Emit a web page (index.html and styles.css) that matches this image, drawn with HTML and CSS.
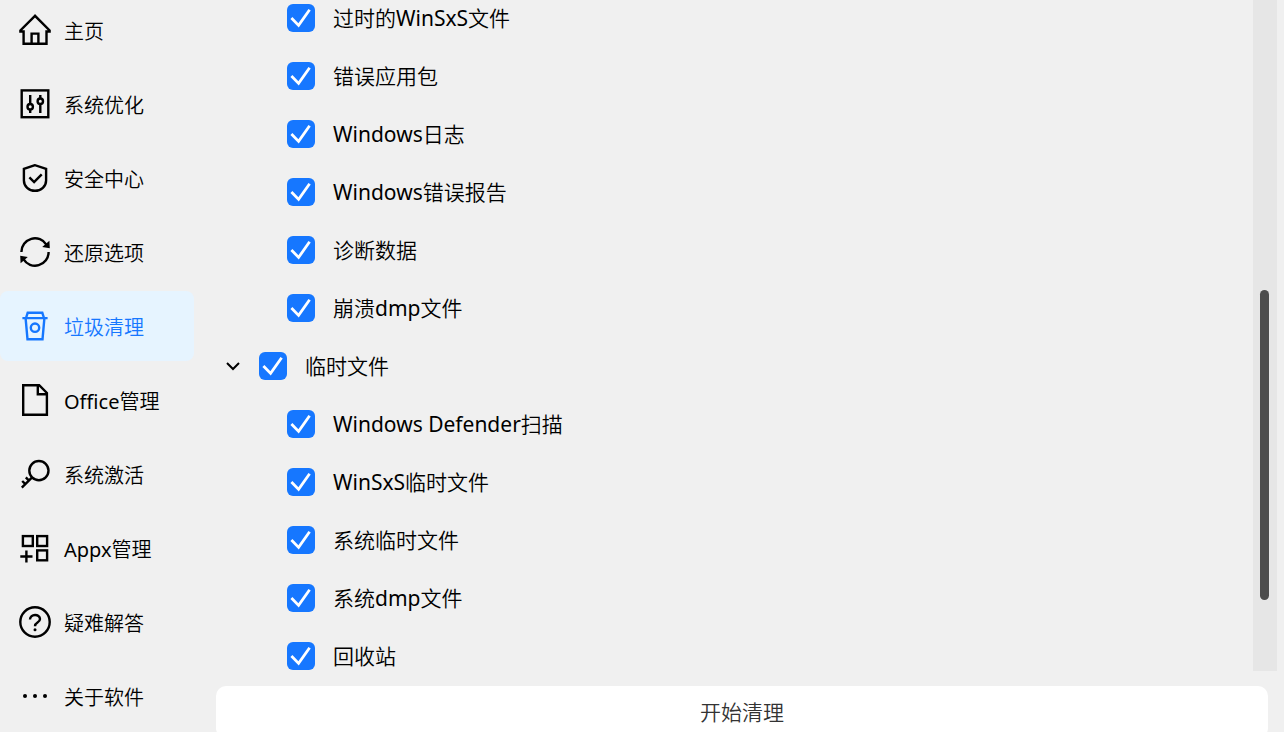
FILE: index.html
```html
<!DOCTYPE html>
<html lang="zh-CN">
<head>
  <meta charset="UTF-8" />
  <title>垃圾清理</title>
  <link rel="stylesheet" href="styles.css">
</head>
<body>
  <nav class="sidebar">
    <a class="nav-item" href="#home">
      <svg class="icon" viewBox="0 0 32 32"><path d="M16 1.8 1.4 16.4v1.1h3.2v12.2h22.9V17.5h3.1v-1.1z"/><path d="M12.6 29.5V19.6h6.8v9.9"/></svg>
      <span class="nav-text">主页</span>
    </a>
    <a class="nav-item" href="#optimize">
      <svg class="icon" viewBox="0 0 32 32"><rect x="2.7" y="2.4" width="26.6" height="26.8"/><path d="M11.2 7v9M11.2 21.6V25M21.3 7v3.2M21.3 16v9"/><circle cx="11.2" cy="18.7" r="2.7"/><circle cx="21.3" cy="13.2" r="2.7"/></svg>
      <span class="nav-text">系统优化</span>
    </a>
    <a class="nav-item" href="#security">
      <svg class="icon" viewBox="0 0 32 32"><path d="M16 3.2 4.9 6.8v11.6a11.1 10.4 0 0 0 22.2 0V6.8z"/><path d="m10.4 15.4 4.7 4.7 7.6-7.8"/></svg>
      <span class="nav-text">安全中心</span>
    </a>
    <a class="nav-item" href="#restore">
      <svg class="icon" viewBox="0 0 32 32"><path d="M2.4 16A13.6 13.6 0 0 1 27.6 8.8M29.6 16A13.6 13.6 0 0 1 4.4 23.2"/><path class="solid" d="m30.4 4.8.4 7.4-7.6-1.2zM1.6 27.2l-.4-7.4 7.6 1.2z"/></svg>
      <span class="nav-text">还原选项</span>
    </a>
    <a class="nav-item active" href="#clean">
      <svg class="icon" viewBox="0 0 32 32"><path d="M3.4 8.1h25.2M7 8l1.7-5.2h14.6L25 8M6.6 8.1l1.9 21.2h15l1.9-21.2"/><circle cx="16" cy="17.7" r="4.2"/></svg>
      <span class="nav-text">垃圾清理</span>
    </a>
    <a class="nav-item" href="#office">
      <svg class="icon" viewBox="0 0 32 32"><path d="M4.2 1.2h16l7.7 7.7v21.9H4.2zM18.8 1.6v8.7h8.7"/></svg>
      <span class="nav-text">Office管理</span>
    </a>
    <a class="nav-item" href="#activate">
      <svg class="icon" viewBox="0 0 32 32"><circle cx="19.9" cy="12.6" r="9.6"/><path d="M13.1 19.4 2.8 29.6M10 22.6l-3.2-3.2M6.4 26.2 3.2 23"/></svg>
      <span class="nav-text">系统激活</span>
    </a>
    <a class="nav-item" href="#appx">
      <svg class="icon" viewBox="0 0 32 32"><rect x="3.9" y="4.1" width="9.9" height="9.9"/><rect x="18.2" y="4.1" width="9.9" height="9.9"/><rect x="18.2" y="18.4" width="9.9" height="9.9"/><path d="M7.4 18.4v12.2M1.3 24.5h12.2"/></svg>
      <span class="nav-text">Appx管理</span>
    </a>
    <a class="nav-item" href="#faq">
      <svg class="icon" viewBox="0 0 32 32"><circle cx="16" cy="16" r="14.7"/><path d="M11 13.5c0-6 10-6 10-.4 0 4-5 3-5 7.1"/><circle class="solid" cx="16" cy="23.8" r="1.5"/></svg>
      <span class="nav-text">疑难解答</span>
    </a>
    <a class="nav-item" href="#about">
      <svg class="icon" viewBox="0 0 32 32"><g class="solid"><circle cx="6" cy="16" r="2"/><circle cx="16" cy="16" r="2"/><circle cx="26" cy="16" r="2"/></g></svg>
      <span class="nav-text">关于软件</span>
    </a>
  </nav>

  <main class="content">
    <div class="scroll-area">
      <ul class="tree">
        <li><label class="row child"><input type="checkbox" checked />过时的WinSxS文件</label></li>
        <li><label class="row child"><input type="checkbox" checked />错误应用包</label></li>
        <li><label class="row child"><input type="checkbox" checked />Windows日志</label></li>
        <li><label class="row child"><input type="checkbox" checked />Windows错误报告</label></li>
        <li><label class="row child"><input type="checkbox" checked />诊断数据</label></li>
        <li><label class="row child"><input type="checkbox" checked />崩溃dmp文件</label></li>
        <li class="group">
          <button class="toggle" type="button" aria-label="折叠">
            <svg class="chevron" viewBox="0 0 16 16"><path d="m2 5 6 6 6-6"/></svg>
          </button>
          <label class="row"><input type="checkbox" checked />临时文件</label>
        </li>
        <li><label class="row child"><input type="checkbox" checked />Windows Defender扫描</label></li>
        <li><label class="row child"><input type="checkbox" checked />WinSxS临时文件</label></li>
        <li><label class="row child"><input type="checkbox" checked />系统临时文件</label></li>
        <li><label class="row child"><input type="checkbox" checked />系统dmp文件</label></li>
        <li><label class="row child"><input type="checkbox" checked />回收站</label></li>
      </ul>
      <div class="scrollbar"><div class="thumb"></div></div>
    </div>
    <button class="start" type="button">开始清理</button>
  </main>
</body>
</html>
```
FILE: styles.css
```css
* {
  box-sizing: border-box;
}

body {
  margin: 0;
  height: 100vh;
  display: flex;
  overflow: hidden;
  background: #f0f0f0;
  color: #000;
  font-family: "Noto Sans", "Noto Sans CJK SC DemiLight", "Noto Sans CJK SC Light", "Noto Sans CJK SC", sans-serif;
  font-size: 21px;
  line-height: 28px;
}

/* sidebar */
.sidebar {
  flex: none;
  width: 194px;
  margin-top: -5px;
  display: flex;
  flex-direction: column;
  gap: 4px;
}

.nav-item {
  flex: none;
  display: flex;
  align-items: center;
  gap: 13px;
  height: 70px;
  padding-left: 19px;
  border-radius: 8px;
  color: #000;
  font-size: 20px;
  text-decoration: none;
}

.nav-item.active {
  background: #e6f4ff;
  color: #1677ff;
}

.nav-text {
  padding-top: 3px;
}

.icon {
  flex: none;
  width: 32px;
  height: 32px;
  fill: none;
  stroke: currentColor;
  stroke-width: 2.4;
}

.icon .solid {
  fill: currentColor;
  stroke: none;
}

/* content */
.content {
  flex: 1;
  min-width: 0;
  display: flex;
  flex-direction: column;
  padding-left: 22px;
}

.scroll-area {
  flex: 1;
  min-height: 0;
  display: flex;
  overflow: hidden;
  margin-right: 7px;
}

.tree {
  flex: 1;
  margin: -11px 0 0;
  padding: 0;
  list-style: none;
}

.row {
  display: flex;
  align-items: center;
  gap: 18px;
  height: 58px;
}

.child {
  padding-left: 71px;
}

.group {
  display: flex;
  align-items: center;
}

.toggle {
  display: flex;
  align-items: center;
  justify-content: center;
  width: 34px;
  height: 28px;
  margin-right: 9px;
  padding: 0;
  border: none;
  background: none;
}

.chevron {
  width: 16px;
  height: 16px;
  fill: none;
  stroke: #000;
  stroke-width: 2;
}

input[type="checkbox"] {
  flex: none;
  appearance: none;
  width: 28px;
  height: 28px;
  margin: 0;
  border: 1px solid #d9d9d9;
  border-radius: 6px;
  background: #fff;
}

input[type="checkbox"]:checked {
  border: none;
  background: #1677ff url("data:image/svg+xml,%3Csvg xmlns='http://www.w3.org/2000/svg' viewBox='0 0 28 28'%3E%3Cpath d='M4.4 14l7.2 7.4L22.6 5.8' fill='none' stroke='white' stroke-width='2.8'/%3E%3C/svg%3E");
}

.scrollbar {
  flex: none;
  width: 24px;
  padding-left: 7px;
  background: #e6e6e6;
}

.thumb {
  width: 9px;
  height: 310px;
  margin-top: 290px;
  border-radius: 5px;
  background: #4d4d4d;
}

.start {
  flex: none;
  height: 52px;
  margin: 15px 16px -6px 0;
  border: none;
  border-radius: 10px;
  background: #fff;
  color: #333;
  font: inherit;
}
```
